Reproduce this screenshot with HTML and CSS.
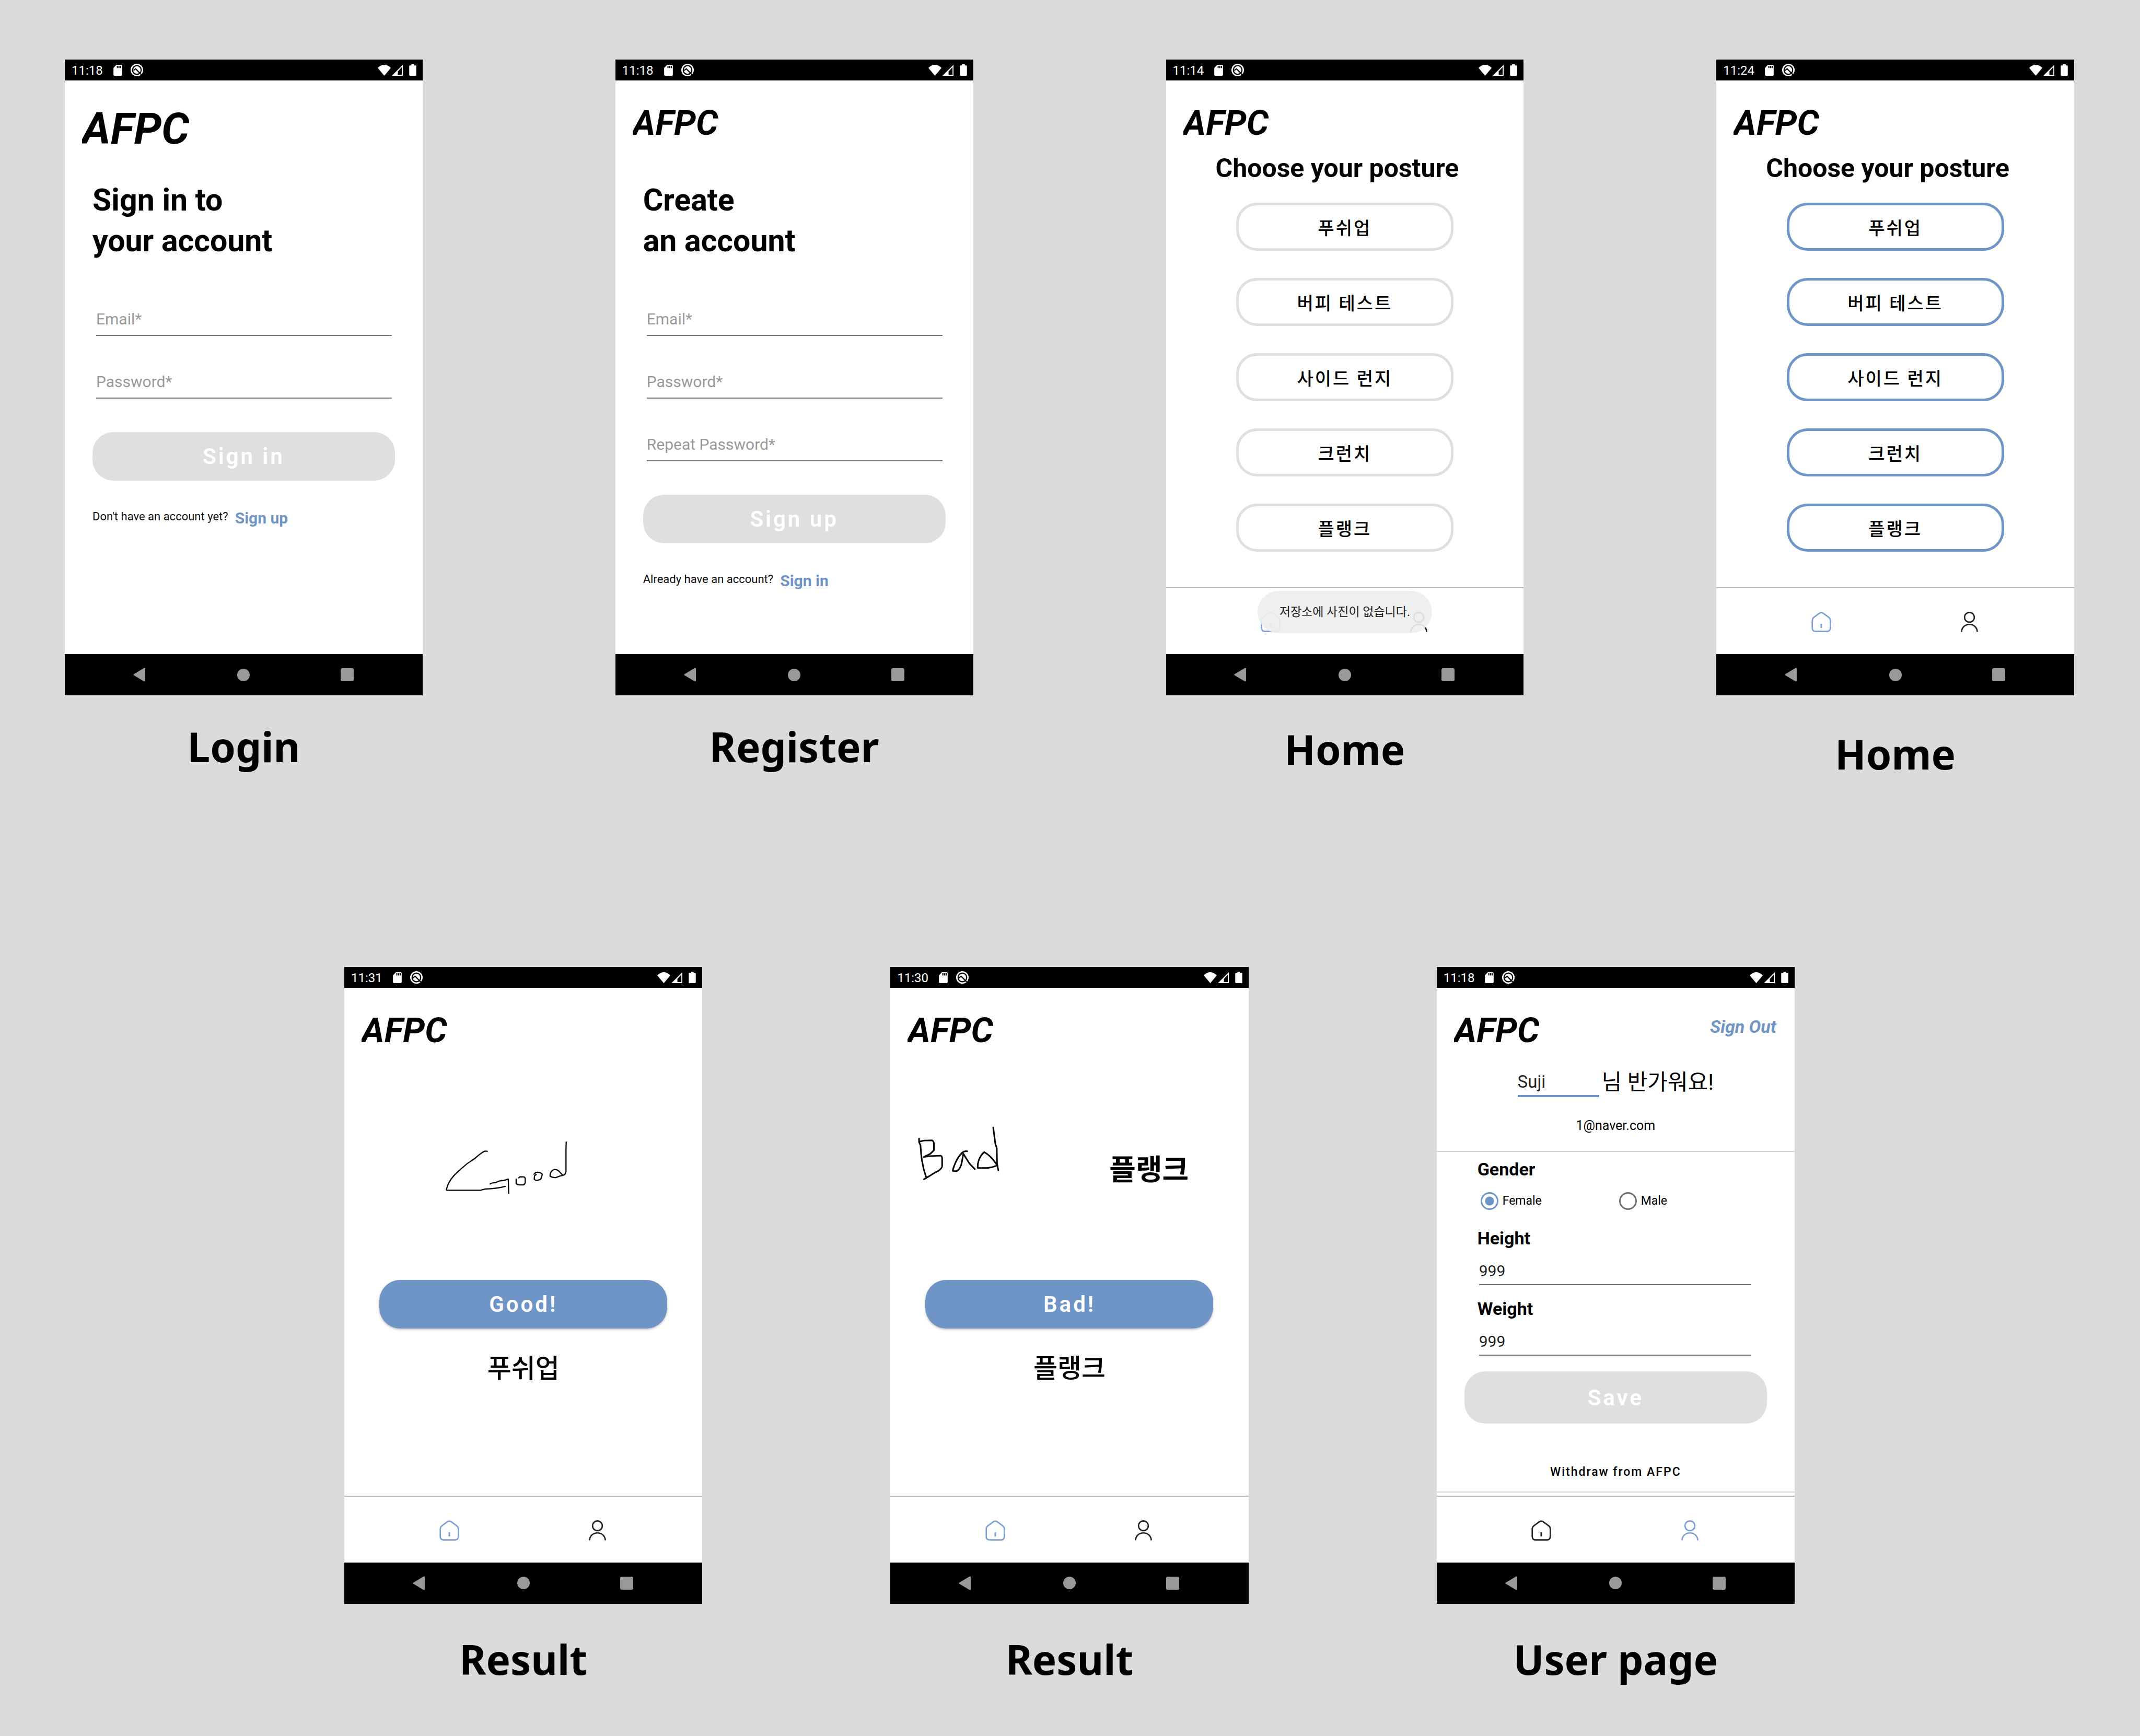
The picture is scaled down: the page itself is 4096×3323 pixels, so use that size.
FILE: index.html
```html
<!DOCTYPE html>
<html lang="en">
<head>
<meta charset="utf-8">
<meta name="viewport" content="width=device-width, initial-scale=1">
<title>AFPC screens</title>
<link rel="stylesheet" href="styles.css">
</head>
<body>
<svg class="sprite" aria-hidden="true">
  <symbol id="sd" viewBox="0 0 62 78"><path fill="#fff" fill-rule="evenodd" d="M21 0H55Q62 0 62 7V71Q62 78 55 78H7Q0 78 0 71V22ZM24 7V23H31V7ZM35 7V23H43V7ZM47 7V23H55V7Z"/></symbol>
  <symbol id="dnd" viewBox="0 0 87 87"><circle cx="43.500" cy="43.500" r="43.500" fill="#fff"/><g fill="none" stroke="#000" stroke-width="8"><circle cx="43.500" cy="43.500" r="30"/><path d="M20 47L35 35L78 80"/></g></symbol>
  <symbol id="wifi" viewBox="0 0 92 77"><path fill="#fff" d="M0 22Q46 -22 92 22L46 77Z"/></symbol>
  <symbol id="signal" viewBox="0 0 78 78"><path fill="#fff" fill-rule="evenodd" d="M78 0V78H0ZM71 17L43 47V71H71Z"/></symbol>
  <symbol id="battery" viewBox="0 0 49 80"><path fill="#fff" d="M15 0H34V8H44Q49 8 49 13V75Q49 80 44 80H5Q0 80 0 75V13Q0 8 5 8H15Z"/></symbol>
  <symbol id="back" viewBox="0 0 23 27"><path fill="#999" d="M1 12.5L20.500 .8Q23 0 23 2V25Q23 27 20.500 26.200L1 14.500Q-.5 13.500 1 12.500Z"/></symbol>
  <symbol id="circle" viewBox="0 0 24 24"><circle cx="12" cy="12" r="12" fill="#999"/></symbol>
  <symbol id="square" viewBox="0 0 25 25"><rect width="25" height="25" rx="3" fill="#999"/></symbol>
  <symbol id="house" viewBox="0 0 84 88"><path fill="none" stroke="currentColor" stroke-width="6" d="M3 38Q3 29 10 24L33 7Q42 0 51 7L74 24Q81 29 81 38V70Q81 85 66 85H18Q3 85 3 70Z"/><path stroke="currentColor" stroke-width="7" d="M42 52V70"/></symbol>
  <symbol id="person" viewBox="0 0 74 88"><g fill="none" stroke="currentColor" stroke-width="6"><circle cx="37" cy="24" r="21"/><path d="M3 87C5 44 69 44 71 87"/></g></symbol>
</svg>

<main class="board">
  <div class="row row-top">

    <figure class="screen" id="login">
      <section class="phone">
        <div class="status">
          <span class="time">11:18</span>
          <svg class="i-sd"><use href="#sd"/></svg>
          <svg class="i-dnd"><use href="#dnd"/></svg>
          <svg class="i-wifi"><use href="#wifi"/></svg>
          <svg class="i-signal"><use href="#signal"/></svg>
          <svg class="i-battery"><use href="#battery"/></svg>
        </div>
        <div class="content">
          <header class="bar bar-auth"><p class="brand brand-large">AFPC</p></header>
          <form class="auth">
            <h2 class="title">Sign in to<br>your account</h2>
            <div class="fields">
              <input class="field" type="email" placeholder="Email*" aria-label="Email">
              <input class="field" type="password" placeholder="Password*" aria-label="Password">
            </div>
            <button class="button button-muted" type="button">Sign in</button>
            <p class="switch">Don't have an account yet? <a href="#register">Sign up</a></p>
          </form>
        </div>
        <div class="system">
          <button type="button" aria-label="Back"><svg class="i-back"><use href="#back"/></svg></button>
          <button type="button" aria-label="Home"><svg class="i-circle"><use href="#circle"/></svg></button>
          <button type="button" aria-label="Overview"><svg class="i-square"><use href="#square"/></svg></button>
        </div>
      </section>
      <figcaption class="caption">Login</figcaption>
    </figure>

    <figure class="screen" id="register">
      <section class="phone">
        <div class="status">
          <span class="time">11:18</span>
          <svg class="i-sd"><use href="#sd"/></svg>
          <svg class="i-dnd"><use href="#dnd"/></svg>
          <svg class="i-wifi"><use href="#wifi"/></svg>
          <svg class="i-signal"><use href="#signal"/></svg>
          <svg class="i-battery"><use href="#battery"/></svg>
        </div>
        <div class="content">
          <header class="bar bar-auth"><p class="brand">AFPC</p></header>
          <form class="auth">
            <h2 class="title">Create<br>an account</h2>
            <div class="fields">
              <input class="field" type="email" placeholder="Email*" aria-label="Email">
              <input class="field" type="password" placeholder="Password*" aria-label="Password">
              <input class="field" type="password" placeholder="Repeat Password*" aria-label="Repeat password">
            </div>
            <button class="button button-muted" type="button">Sign up</button>
            <p class="switch">Already have an account? <a href="#login">Sign in</a></p>
          </form>
        </div>
        <div class="system">
          <button type="button" aria-label="Back"><svg class="i-back"><use href="#back"/></svg></button>
          <button type="button" aria-label="Home"><svg class="i-circle"><use href="#circle"/></svg></button>
          <button type="button" aria-label="Overview"><svg class="i-square"><use href="#square"/></svg></button>
        </div>
      </section>
      <figcaption class="caption">Register</figcaption>
    </figure>

    <figure class="screen">
      <section class="phone">
        <div class="status">
          <span class="time">11:14</span>
          <svg class="i-sd"><use href="#sd"/></svg>
          <svg class="i-dnd"><use href="#dnd"/></svg>
          <svg class="i-wifi"><use href="#wifi"/></svg>
          <svg class="i-signal"><use href="#signal"/></svg>
          <svg class="i-battery"><use href="#battery"/></svg>
        </div>
        <div class="content">
          <header class="bar"><p class="brand">AFPC</p></header>
          <h2 class="prompt">Choose your posture</h2>
          <div class="postures">
            <button type="button" lang="ko">푸쉬업</button>
            <button type="button" lang="ko">버피 테스트</button>
            <button type="button" lang="ko">사이드 런지</button>
            <button type="button" lang="ko">크런치</button>
            <button type="button" lang="ko">플랭크</button>
          </div>
        </div>
        <nav class="tabs">
          <a class="tab active" href="#home" aria-label="Home"><svg class="i-house"><use href="#house"/></svg></a>
          <a class="tab" href="#user" aria-label="User page"><svg class="i-person"><use href="#person"/></svg></a>
          <p class="toast" lang="ko">저장소에 사진이 없습니다.</p>
        </nav>
        <div class="system">
          <button type="button" aria-label="Back"><svg class="i-back"><use href="#back"/></svg></button>
          <button type="button" aria-label="Home"><svg class="i-circle"><use href="#circle"/></svg></button>
          <button type="button" aria-label="Overview"><svg class="i-square"><use href="#square"/></svg></button>
        </div>
      </section>
      <figcaption class="caption caption-low">Home</figcaption>
    </figure>

    <figure class="screen" id="home">
      <section class="phone">
        <div class="status">
          <span class="time">11:24</span>
          <svg class="i-sd"><use href="#sd"/></svg>
          <svg class="i-dnd"><use href="#dnd"/></svg>
          <svg class="i-wifi"><use href="#wifi"/></svg>
          <svg class="i-signal"><use href="#signal"/></svg>
          <svg class="i-battery"><use href="#battery"/></svg>
        </div>
        <div class="content">
          <header class="bar"><p class="brand">AFPC</p></header>
          <h2 class="prompt">Choose your posture</h2>
          <div class="postures ready">
            <button type="button" lang="ko">푸쉬업</button>
            <button type="button" lang="ko">버피 테스트</button>
            <button type="button" lang="ko">사이드 런지</button>
            <button type="button" lang="ko">크런치</button>
            <button type="button" lang="ko">플랭크</button>
          </div>
        </div>
        <nav class="tabs">
          <a class="tab active" href="#home" aria-label="Home"><svg class="i-house"><use href="#house"/></svg></a>
          <a class="tab" href="#user" aria-label="User page"><svg class="i-person"><use href="#person"/></svg></a>
        </nav>
        <div class="system">
          <button type="button" aria-label="Back"><svg class="i-back"><use href="#back"/></svg></button>
          <button type="button" aria-label="Home"><svg class="i-circle"><use href="#circle"/></svg></button>
          <button type="button" aria-label="Overview"><svg class="i-square"><use href="#square"/></svg></button>
        </div>
      </section>
      <figcaption class="caption caption-lowest">Home</figcaption>
    </figure>
  </div>

  <div class="row row-bottom">

    <figure class="screen">
      <section class="phone">
        <div class="status">
          <span class="time">11:31</span>
          <svg class="i-sd"><use href="#sd"/></svg>
          <svg class="i-dnd"><use href="#dnd"/></svg>
          <svg class="i-wifi"><use href="#wifi"/></svg>
          <svg class="i-signal"><use href="#signal"/></svg>
          <svg class="i-battery"><use href="#battery"/></svg>
        </div>
        <div class="content">
          <header class="bar"><p class="brand">AFPC</p></header>
          <div class="picture picture-good">
            <svg class="sketch-good" viewBox="440 740 530 230" preserveAspectRatio="none" role="img" aria-label="Handwritten sketch">
              <g fill="none" stroke="#000" stroke-width="5" stroke-linecap="round" stroke-linejoin="round">
                <path d="M621 787Q612 784 603 790Q590 798 574 812C556 827 540 833 528 845C512 858 500 867 481 887C466 904 453 925 450 944Q450 947 454 947H592L613 942C640 941 668 939 696 931"/>
                <path d="M633 921Q640 916 655 916L671 909L690 907L709 901L711 960"/>
                <path d="M742 901V919Q747 925 756 925H772Q780 922 780 913V898Q778 891 770 892H757L753 896"/>
                <path d="M826 882L819 888L818 902Q822 907 832 906L843 903Q851 893 851 880L845 876Q835 871 824 874L817 881"/>
                <path d="M937 885L921 868Q912 860 901 862Q888 867 885 880L884 889Q894 896 908 895L924 889L937 886Q949 884 951 870V775L952 749"/>
              </g>
            </svg>
          </div>
          <button class="button button-result" type="button">Good!</button>
          <p class="posture" lang="ko">푸쉬업</p>
        </div>
        <nav class="tabs">
          <a class="tab active" href="#home" aria-label="Home"><svg class="i-house"><use href="#house"/></svg></a>
          <a class="tab" href="#user" aria-label="User page"><svg class="i-person"><use href="#person"/></svg></a>
        </nav>
        <div class="system">
          <button type="button" aria-label="Back"><svg class="i-back"><use href="#back"/></svg></button>
          <button type="button" aria-label="Home"><svg class="i-circle"><use href="#circle"/></svg></button>
          <button type="button" aria-label="Overview"><svg class="i-square"><use href="#square"/></svg></button>
        </div>
      </section>
      <figcaption class="caption">Result</figcaption>
    </figure>

    <figure class="screen">
      <section class="phone">
        <div class="status">
          <span class="time">11:30</span>
          <svg class="i-sd"><use href="#sd"/></svg>
          <svg class="i-dnd"><use href="#dnd"/></svg>
          <svg class="i-wifi"><use href="#wifi"/></svg>
          <svg class="i-signal"><use href="#signal"/></svg>
          <svg class="i-battery"><use href="#battery"/></svg>
        </div>
        <div class="content">
          <header class="bar"><p class="brand">AFPC</p></header>
          <div class="picture picture-bad">
            <svg class="sketch-bad" viewBox="55 10 600 443" role="img" aria-label="Handwritten sketch">
              <g fill="none" stroke="#000" stroke-width="11" stroke-linecap="round" stroke-linejoin="round">
                <path d="M73 123V148L83 170L88 235L93 275L106 340L124 397"/>
                <path d="M75 144L110 136L165 135Q177 140 178 160V205L152 230L107 252L150 246L225 243Q235 245 236 260V320Q228 340 205 353L190 360L150 385L107 410"/>
                <path d="M413 212Q395 207 378 222Q345 255 325 305Q313 335 311 351L340 352Q362 340 373 300L386 230L430 300L467 338"/>
                <path d="M597 44L612 160L622 190L624 300L633 347"/>
                <path d="M626 312L595 270Q560 230 532 218Q505 245 495 275Q486 300 487 329L555 330L587 325L626 312"/>
              </g>
            </svg>
            <p class="picture-label" lang="ko">플랭크</p>
          </div>
          <button class="button button-result" type="button">Bad!</button>
          <p class="posture" lang="ko">플랭크</p>
        </div>
        <nav class="tabs">
          <a class="tab active" href="#home" aria-label="Home"><svg class="i-house"><use href="#house"/></svg></a>
          <a class="tab" href="#user" aria-label="User page"><svg class="i-person"><use href="#person"/></svg></a>
        </nav>
        <div class="system">
          <button type="button" aria-label="Back"><svg class="i-back"><use href="#back"/></svg></button>
          <button type="button" aria-label="Home"><svg class="i-circle"><use href="#circle"/></svg></button>
          <button type="button" aria-label="Overview"><svg class="i-square"><use href="#square"/></svg></button>
        </div>
      </section>
      <figcaption class="caption">Result</figcaption>
    </figure>

    <figure class="screen" id="user">
      <section class="phone">
        <div class="status">
          <span class="time">11:18</span>
          <svg class="i-sd"><use href="#sd"/></svg>
          <svg class="i-dnd"><use href="#dnd"/></svg>
          <svg class="i-wifi"><use href="#wifi"/></svg>
          <svg class="i-signal"><use href="#signal"/></svg>
          <svg class="i-battery"><use href="#battery"/></svg>
        </div>
        <div class="content">
          <header class="bar"><p class="brand">AFPC</p><a class="signout" href="#login">Sign Out</a></header>
          <div class="greeting">
            <input class="name" type="text" value="Suji" size="1" aria-label="Name">
            <span lang="ko">님 반가워요!</span>
          </div>
          <p class="mail">1@naver.com</p>
          <form class="profile">
            <fieldset class="group">
              <legend class="label">Gender</legend>
              <div class="options">
                <label class="option"><input type="radio" name="gender" checked>Female</label>
                <label class="option"><input type="radio" name="gender">Male</label>
              </div>
            </fieldset>
            <div class="entry">
              <label class="label" for="height">Height</label>
              <input class="measure" id="height" type="text" value="999">
            </div>
            <div class="entry">
              <label class="label" for="weight">Weight</label>
              <input class="measure" id="weight" type="text" value="999">
            </div>
            <button class="button button-muted button-save" type="button">Save</button>
            <button class="withdraw" type="button">Withdraw from AFPC</button>
          </form>
        </div>
        <nav class="tabs">
          <a class="tab" href="#home" aria-label="Home"><svg class="i-house"><use href="#house"/></svg></a>
          <a class="tab active" href="#user" aria-label="User page"><svg class="i-person"><use href="#person"/></svg></a>
        </nav>
        <div class="system">
          <button type="button" aria-label="Back"><svg class="i-back"><use href="#back"/></svg></button>
          <button type="button" aria-label="Home"><svg class="i-circle"><use href="#circle"/></svg></button>
          <button type="button" aria-label="Overview"><svg class="i-square"><use href="#square"/></svg></button>
        </div>
      </section>
      <figcaption class="caption">User page</figcaption>
    </figure>
  </div>
</main>
</body>
</html>
```

FILE: styles.css
```css
:root {
  --blue: #6f94c6;
  --muted: #dfdfdf;
  --board: #dbdbdb;
  --sans: Roboto, "Noto Sans CJK KR", sans-serif;
}

* { box-sizing: border-box; }

body {
  margin: 0;
  min-height: 100vh;
  background: var(--board);
  color: #000;
  font-family: var(--sans);
}

p, h2, figure, fieldset { margin: 0; }
fieldset { padding: 0; border: 0; min-width: 0; }
legend { padding: 0; }
a { text-decoration: none; }
button, input {
  margin: 0;
  padding: 0;
  border: 0;
  border-radius: 0;
  background: none;
  font-family: inherit;
  outline: 0;
}
svg { display: block; flex: none; }
.sprite { position: absolute; width: 0; height: 0; }

/* Board */
.board { padding-top: 114px; }
.row { display: grid; align-items: start; }
.row-top {
  grid-template-columns: repeat(4, minmax(0, 1fr));
  column-gap: 369px;
  padding: 0 126px 0 124px;
}
.row-bottom {
  grid-template-columns: repeat(3, minmax(0, 1fr));
  column-gap: 360px;
  padding: 0 661px 0 659px;
  margin-top: 353px;
}
.caption {
  padding-top: 43px;
  font: 700 78px/110px "Noto Sans", sans-serif;
  text-align: center;
}
.caption-low { padding-top: 48px; }
.caption-lowest { padding-top: 57px; }
.row-bottom .caption { padding-top: 51px; }

/* Phone */
.phone {
  display: flex;
  flex-direction: column;
  aspect-ratio: 9 / 16;
  background: #fff;
}
.content { flex: 1; }

.status {
  display: flex;
  align-items: center;
  height: 40px;
  padding: 0 12px 0 13px;
  background: #000;
  color: #fff;
}
.time { padding-top: 2px; font-size: 24px; line-height: 40px; }
.i-sd { width: 17px; height: 21px; margin-left: 20px; }
.i-dnd { width: 24px; height: 24px; margin-left: 16px; }
.i-wifi { width: 25px; height: 21px; margin-left: auto; }
.i-signal { width: 21px; height: 21px; margin-left: 2px; }
.i-battery { width: 14px; height: 22px; margin-left: 12px; }

.system {
  display: flex;
  justify-content: center;
  height: 79px;
  background: #000;
}
.system button {
  display: grid;
  place-items: center;
  width: 198px;
}
.i-back { width: 23px; height: 27px; margin-right: 4px; }
.i-circle { width: 24px; height: 24px; }
.i-square { width: 25px; height: 25px; }

.tabs {
  position: relative;
  display: flex;
  justify-content: center;
  height: 128px;
  padding-top: 3px;
  border-top: 2px solid #b8b8b8;
}
.tab {
  display: grid;
  place-items: center;
  width: 284px;
  color: #222;
}
.tab.active { color: #7ca0d3; }
.i-house { width: 38px; height: 39px; }
.i-person { width: 33px; height: 39px; }

.toast {
  position: absolute;
  top: 5px;
  left: 50%;
  transform: translateX(-50%);
  padding: 0 42px;
  border-radius: 41px;
  background: rgba(238, 238, 238, .92);
  color: #1c1c1c;
  font-size: 23px;
  line-height: 81px;
  white-space: nowrap;
}

/* Header */
.bar {
  display: flex;
  justify-content: space-between;
  align-items: flex-start;
  padding: 42px 35px 0 33px;
}
.bar-auth { height: 190px; }
.brand {
  overflow: hidden;
  font-size: 67px;
  font-style: italic;
  font-weight: 700;
  line-height: 78px;
}
.brand-large { font-size: 84px; line-height: 102px; }
.signout {
  margin-top: 12px;
  color: var(--blue);
  font-size: 34px;
  font-style: italic;
  font-weight: 700;
  line-height: 40px;
}

/* Buttons */
.button {
  display: block;
  height: 93px;
  border-radius: 40px;
  color: #fff;
  font-size: 42px;
  font-weight: 600;
  letter-spacing: 4px;
}
.button-muted { width: 100%; background: var(--muted); }
.button-result {
  width: 551px;
  max-width: 100%;
  margin: 0 auto;
  background: var(--blue);
  box-shadow: 0 2px 4px rgba(0, 0, 0, .25);
}

/* Login and register */
.auth { padding: 0 53px; }
.title { font-size: 59px; font-weight: 700; line-height: 78px; }
.fields {
  display: grid;
  gap: 69px;
  padding: 92px 6px 64px 7px;
}
.field {
  width: 100%;
  height: 51px;
  padding-bottom: 13px;
  border-bottom: 2px solid #777;
  color: #222;
  font-size: 30px;
  line-height: 36px;
}
.field::placeholder { color: #999; opacity: 1; }
.switch {
  display: flex;
  align-items: flex-start;
  gap: 13px;
  margin-top: 54px;
  color: #111;
  font-size: 22px;
  line-height: 30px;
}
.switch a { color: var(--blue); font-size: 30px; font-weight: 700; line-height: 36px; }

/* Home */
.prompt {
  margin: 18px 0 36px 95px;
  font-size: 50px;
  font-weight: 700;
  line-height: 60px;
}
.postures { display: grid; justify-content: center; gap: 52px; }
.postures button {
  width: 416px;
  height: 92px;
  border: 5px solid var(--muted);
  border-radius: 40px;
  font-size: 34px;
  font-weight: 500;
  letter-spacing: 3px;
}
.postures.ready button { border-color: var(--blue); }

/* Result */
.picture { display: flex; height: 439px; }
.picture-good { padding: 171px 0 0 191px; }
.picture-bad { align-items: flex-end; gap: 206px; padding: 0 0 181px 50px; }
.sketch-good { width: 242px; height: 107px; }
.sketch-bad { width: 163px; height: 120px; }
.picture-label { font-size: 55px; font-weight: 700; line-height: 60px; }
.posture {
  margin-top: 47px;
  font-size: 50px;
  font-weight: 500;
  line-height: 60px;
  text-align: center;
}

/* User page */
.greeting {
  display: flex;
  justify-content: center;
  align-items: flex-end;
  gap: 6px;
  margin-top: 33px;
  font-size: 42px;
  line-height: 56px;
}
.name {
  width: 155px;
  height: 50px;
  padding-bottom: 6px;
  border-bottom: 4px solid var(--blue);
  color: #222;
  font-size: 33px;
  line-height: 40px;
}
.mail {
  padding: 40px 0 33px;
  border-bottom: 2px solid #d4d4d4;
  font-size: 25px;
  line-height: 30px;
  text-align: center;
}
.profile {
  padding: 13px 53px 22px;
  border-bottom: 2px solid #d4d4d4;
}
.label { display: block; font-size: 34px; font-weight: 700; line-height: 40px; }
.group, .entry { padding: 0 30px 0 25px; }
.options {
  display: grid;
  grid-template-columns: 265px 1fr;
  padding: 21px 0 31px 6px;
}
.option {
  display: flex;
  align-items: center;
  gap: 8px;
  font-size: 23px;
  line-height: 40px;
}
.option input {
  appearance: none;
  width: 34px;
  height: 34px;
  border: 3px solid #707070;
  border-radius: 50%;
}
.option input:checked {
  border-color: var(--blue);
  background: radial-gradient(circle, var(--blue) 8px, transparent 9px);
}
.entry + .entry { margin-top: 25px; }
.measure {
  width: calc(100% - 3px);
  height: 46px;
  margin: 24px 0 0 3px;
  padding-bottom: 8px;
  border-bottom: 2px solid #777;
  color: #222;
  font-size: 30px;
  line-height: 36px;
}
.button-save { height: 100px; margin-top: 30px; }
.withdraw {
  display: block;
  margin: 78px auto 0;
  font-size: 23px;
  font-weight: 500;
  letter-spacing: 2px;
  line-height: 30px;
}
```
